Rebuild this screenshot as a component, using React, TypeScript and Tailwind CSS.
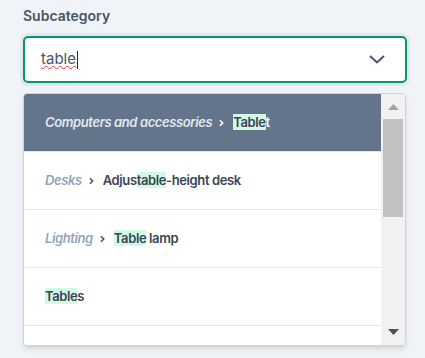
import React from 'react'

type Option = {
  parent?: string
  before: string
  match: string
  after: string
  active?: boolean
}

const options: Option[] = [
  { parent: 'Computers and accessories', before: '', match: 'Table', after: 't', active: true },
  { parent: 'Desks', before: 'Adjus', match: 'table', after: '-height desk' },
  { parent: 'Lighting', before: '', match: 'Table', after: ' lamp' },
  { before: '', match: 'Table', after: 's' },
  { before: '', match: '', after: '' },
]

function Chevron({ className }: { className: string }) {
  return (
    <svg viewBox="0 0 6 10" className={className} fill="none" stroke="currentColor" strokeWidth={2}>
      <path d="M1 1.5 L4.5 5 L1 8.5" />
    </svg>
  )
}

function Row({ o }: { o: Option }) {
  return (
    <div
      className={`flex h-[58px] shrink-0 items-center border-b border-[#e2e8f0] pl-[21px] text-[13px] tracking-[-0.03em] ${
        o.active ? 'bg-[#64748b]' : 'bg-white'
      }`}
    >
      {o.parent ? (
        <>
          <span className={`font-semibold italic ${o.active ? 'text-[#e2e8f0]' : 'text-[#94a3b8]'}`}>{o.parent}</span>
          <Chevron className={`ml-[7px] mr-[9px] h-[8px] w-[5px] ${o.active ? 'text-white' : 'text-[#475569]'}`} />
        </>
      ) : null}
      <span className={`font-semibold ${o.active ? 'text-white' : 'text-[#3b4556]'}`}>
        {o.before}
        {o.match ? <mark className="bg-[#d1fae5] text-[#3b4556]">{o.match}</mark> : null}
        {o.after}
      </span>
    </div>
  )
}

export default function App() {
  return (
    <div className="min-h-screen bg-[#f0f3f8] pl-[23px] pt-[6px] font-['Inter',sans-serif]">
      <div className="w-[384px]">
        {/* label */}
        <div className="text-[14px] font-semibold leading-[20px] text-[#4b5563]">Subcategory</div>

        {/* input */}
        <div className="mt-[10px] flex h-[47px] items-center rounded-[5px] border-2 border-[#059669] bg-white pl-[16px] pr-[20px] ring-[3px] ring-[#e2e8f0]">
          <div className="flex flex-1 items-center text-[15px] text-[#475569]">
            <span className="underline decoration-red-500 decoration-wavy decoration-1 underline-offset-1">table</span>
            <span className="ml-[1px] h-[18px] w-[1px] bg-[#1f2937]" />
          </div>
          <svg viewBox="0 0 16 9" className="h-[9px] w-[16px] text-[#475569]" fill="none" stroke="currentColor" strokeWidth={2}>
            <path d="M1 1 L8 7.5 L15 1" />
          </svg>
        </div>

        {/* dropdown */}
        <div className="mt-[10px] flex h-[253px] w-[383px] overflow-hidden rounded-[4px] border border-[#cbd5e1] bg-white shadow-md">
          <div className="flex flex-1 flex-col overflow-hidden">
            {options.map((o, i) => (
              <Row key={i} o={o} />
            ))}
          </div>
          <div className="flex w-[24px] flex-col bg-[#f1f1f1]">
            <div className="flex h-[25px] items-center justify-center">
              <svg viewBox="0 0 11 6" className="h-[6px] w-[11px]">
                <path d="M5.5 0 L11 6 L0 6 Z" fill="#a3a3a3" />
              </svg>
            </div>
            <div className="mx-[2px] h-[98px] bg-[#c1c1c1]" />
            <div className="flex-1" />
            <div className="flex h-[26px] items-center justify-center">
              <svg viewBox="0 0 11 6" className="h-[6px] w-[11px]">
                <path d="M0 0 L11 0 L5.5 6 Z" fill="#505050" />
              </svg>
            </div>
          </div>
        </div>
      </div>
    </div>
  )
}
